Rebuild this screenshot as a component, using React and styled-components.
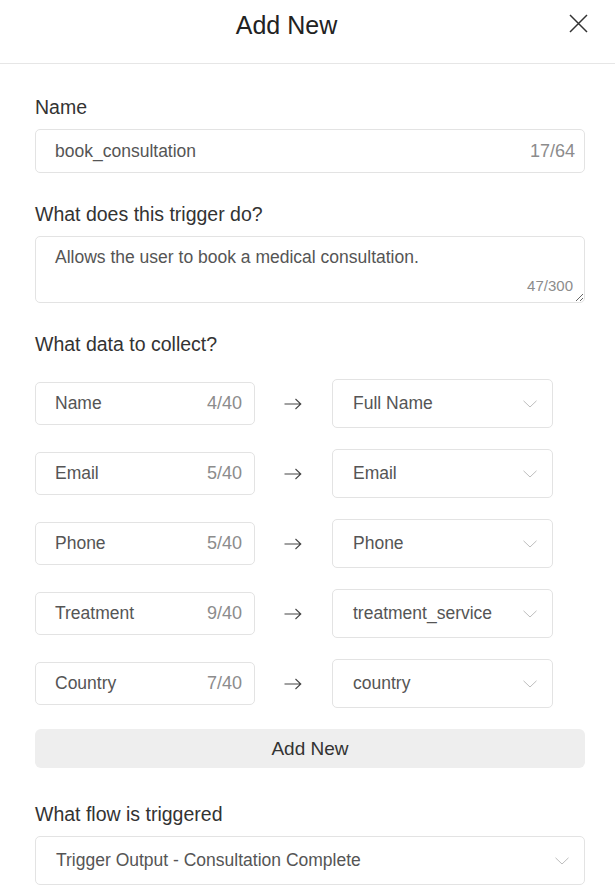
import React from 'react';
import styled, { createGlobalStyle } from 'styled-components';

const GlobalStyle = createGlobalStyle`
  html, body {
    margin: 0;
    padding: 0;
    background: #ffffff;
  }
  body {
    font-family: 'Liberation Sans', Arial, sans-serif;
    color: #333333;
  }
  * {
    box-sizing: border-box;
  }
`;

const Panel = styled.div`
  width: 615px;
  min-height: 891px;
  background: #ffffff;
`;

const Header = styled.header`
  display: flex;
  align-items: flex-start;
  height: 64px;
  padding: 10px 27px 0 5px;
  border-bottom: 1px solid #e6e6e6;
`;

const Title = styled.h1`
  flex: 1;
  margin: 0;
  text-align: center;
  font-size: 25px;
  line-height: 30px;
  font-weight: 400;
  color: #222222;
`;

const CloseButton = styled.button`
  display: flex;
  align-items: center;
  justify-content: center;
  width: 20px;
  height: 20px;
  padding: 0;
  margin-top: 3px;
  background: none;
  border: none;
  cursor: pointer;
`;

const Body = styled.div`
  padding: 31px 30px 0 35px;
`;

const Field = styled.div`
  margin-bottom: ${(p) => p.$space ?? 29}px;
`;

const Label = styled.div`
  font-size: 19.5px;
  line-height: 24px;
  color: #333333;
  margin-bottom: ${(p) => p.$space ?? 10}px;
`;

const InputBox = styled.div`
  display: flex;
  align-items: center;
  justify-content: space-between;
  width: 100%;
  height: ${(p) => p.$height || 44}px;
  padding: 0 ${(p) => p.$padRight || 9}px 0 19px;
  border: 1px solid #e3e3e3;
  border-radius: 5px;
  background: #ffffff;
  font-size: 17.5px;
`;

const Value = styled.span`
  color: #555555;
  white-space: nowrap;
`;

const Count = styled.span`
  color: #8c8c8c;
  font-size: 18px;
`;

const AreaWrap = styled.div`
  position: relative;
  height: 67px;
`;

const TextArea = styled.textarea`
  display: block;
  width: 100%;
  height: 67px;
  margin: 0;
  padding: 8px 19px;
  border: 1px solid #e3e3e3;
  border-radius: 5px;
  font-family: 'Liberation Sans', Arial, sans-serif;
  font-size: 17.5px;
  line-height: 24px;
  color: #555555;
  resize: vertical;
  outline: none;
`;

const AreaCount = styled.span`
  position: absolute;
  right: 12px;
  bottom: 9px;
  font-size: 15px;
  color: #8c8c8c;
`;

const Rows = styled.div`
  display: flex;
  flex-direction: column;
  gap: 21px;
`;

const Row = styled.div`
  display: grid;
  grid-template-columns: 220px 77px 221px;
  align-items: center;
  height: 49px;
`;

const ArrowCell = styled.div`
  display: flex;
  justify-content: center;
  padding-right: 1px;
`;

const Select = styled.div`
  display: flex;
  align-items: center;
  justify-content: space-between;
  height: 49px;
  padding: 0 15px 0 20px;
  border: 1px solid #e3e3e3;
  border-radius: 5px;
  background: #ffffff;
  font-size: 17.5px;
`;

const AddButton = styled.button`
  display: block;
  width: 100%;
  height: 39px;
  margin: 21px 0 34px;
  border: none;
  border-radius: 6px;
  background: #eeeeee;
  font-family: 'Liberation Sans', Arial, sans-serif;
  font-size: 19px;
  color: #333333;
  cursor: pointer;
`;

const CloseIcon = () => (
  <svg width="19" height="19" viewBox="0 0 19 19">
    <path d="M1 1 L18 18 M18 1 L1 18" stroke="#333" strokeWidth="1.5" fill="none" />
  </svg>
);

const Arrow = () => (
  <svg width="18" height="12" viewBox="0 0 18 12">
    <path d="M0.5 6 H16.5 M11.5 1 L16.8 6 L11.5 11" stroke="#444" strokeWidth="1.1" fill="none" />
  </svg>
);

const Chevron = () => (
  <svg width="14" height="8" viewBox="0 0 14 8">
    <path d="M0.5 0.8 L7 7 L13.5 0.8" stroke="#bdbdbd" strokeWidth="1" fill="none" />
  </svg>
);

const mappings = [
  { name: 'Name', count: '4/40', target: 'Full Name' },
  { name: 'Email', count: '5/40', target: 'Email' },
  { name: 'Phone', count: '5/40', target: 'Phone' },
  { name: 'Treatment', count: '9/40', target: 'treatment_service' },
  { name: 'Country', count: '7/40', target: 'country' },
];

export default function App() {
  return (
    <Panel>
      <GlobalStyle />
      <Header>
        <Title>Add New</Title>
        <CloseButton aria-label="close">
          <CloseIcon />
        </CloseButton>
      </Header>
      <Body>
        <Field>
          <Label>Name</Label>
          <InputBox>
            <Value>book_consultation</Value>
            <Count>17/64</Count>
          </InputBox>
        </Field>

        <Field>
          <Label>What does this trigger do?</Label>
          <AreaWrap>
            <TextArea
              readOnly
              value="Allows the user to book a medical consultation."
            />
            <AreaCount>47/300</AreaCount>
          </AreaWrap>
        </Field>

        <Field $space={0}>
          <Label $space={23}>What data to collect?</Label>
          <Rows>
            {mappings.map((m) => (
              <Row key={m.name}>
                <InputBox $height={43} $padRight={12}>
                  <Value>{m.name}</Value>
                  <Count>{m.count}</Count>
                </InputBox>
                <ArrowCell>
                  <Arrow />
                </ArrowCell>
                <Select>
                  <Value>{m.target}</Value>
                  <Chevron />
                </Select>
              </Row>
            ))}
          </Rows>
        </Field>

        <AddButton>Add New</AddButton>

        <Field>
          <Label>What flow is triggered</Label>
          <Select>
            <Value>Trigger Output - Consultation Complete</Value>
            <Chevron />
          </Select>
        </Field>
      </Body>
    </Panel>
  );
}
